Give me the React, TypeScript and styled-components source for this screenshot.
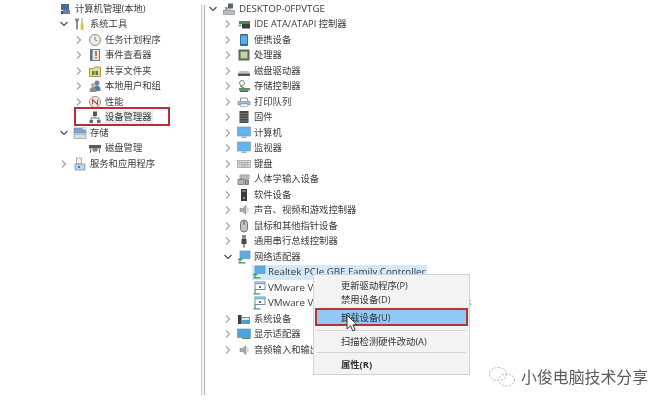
import React from 'react';
import styled, { createGlobalStyle } from 'styled-components';

const GlobalStyle = createGlobalStyle`
  html, body {
    margin: 0;
    padding: 0;
    background: #fff;
  }
`;

const Page = styled.div`
  position: relative;
  width: 670px;
  height: 408px;
  overflow: hidden;
  display: flex;
  align-items: flex-start;
  background: #fff;
  color: #3a3a3a;
  font-family: 'Open Sans', 'Noto Sans CJK SC', sans-serif;
  font-size: 9.3px;
  filter: blur(0.45px);
`;

const Pane = styled.div<{ $width: number; $left: number }>`
  width: ${(p) => p.$width}px;
  flex: none;
  box-sizing: border-box;
  padding: 1px 0 0 ${(p) => p.$left}px;
`;

const Divider = styled.div`
  flex: none;
  width: 4px;
  height: 390px;
  margin-top: 5px;
  background: #f4f4f4;
  border-left: 1px solid #d0d0d0;
  border-right: 1px solid #b4b4b4;
  box-sizing: border-box;
`;

const Row = styled.div<{ $depth: number }>`
  position: relative;
  display: flex;
  align-items: center;
  height: 15.5px;
  padding-left: ${(p) => p.$depth * 15}px;
  white-space: nowrap;
`;

const Expander = styled.span`
  flex: none;
  width: 10px;
  height: 10px;
  margin-right: 4px;
  display: flex;
  align-items: center;
  justify-content: center;
`;

const IconSlot = styled.span`
  flex: none;
  width: 14px;
  height: 14px;
  margin-right: 3px;
  display: flex;
`;

const Label = styled.span<{ $bg?: string; $latin?: boolean }>`
  background: ${(p) => p.$bg ?? 'transparent'};
  font-size: ${(p) => (p.$latin ? 9.75 : 9.3)}px;
  line-height: 14px;
  padding-right: 1px;
`;

const AdapterLabel = styled(Label)`
  margin-left: -1px;
`;

const SelectedStrip = styled.span`
  position: absolute;
  left: 44px;
  top: 0.5px;
  width: 175px;
  height: 14.5px;
  background: #d3e9fb;
`;

const Foreground = styled.span`
  position: relative;
  display: flex;
  align-items: center;
`;

const Callout = styled.span`
  position: absolute;
  left: 30px;
  top: -2.5px;
  width: 96px;
  height: 19px;
  box-sizing: border-box;
  border: 2px solid #bd2c38;
`;

const Menu = styled.div`
  position: absolute;
  left: 313px;
  top: 274px;
  width: 157px;
  height: 101px;
  box-sizing: border-box;
  padding: 3px 1px;
  background: #f3f3f3;
  border: 1px solid #d2d2d2;
  display: flex;
  flex-direction: column;
  color: #333;
`;

const MenuItem = styled.div<{ $active?: boolean; $bold?: boolean }>`
  height: ${(p) => (p.$active ? 20 : 16)}px;
  box-sizing: border-box;
  padding-left: ${(p) => (p.$active ? 24 : 26)}px;
  display: flex;
  align-items: center;
  font-weight: ${(p) => (p.$bold ? 700 : 400)};
  background: ${(p) => (p.$active ? '#92c9f7' : 'transparent')};
  border: ${(p) => (p.$active ? '2px solid #b93240' : 'none')};
`;

const MenuGap = styled.div`
  height: 2px;
`;

const Separator = styled.div`
  height: 1px;
  margin: 4px 2px;
  background: #d4d4d4;
`;

const Cursor = styled.svg`
  position: absolute;
  left: 346px;
  top: 314px;
`;

const Watermark = styled.div`
  position: absolute;
  left: 488px;
  top: 366px;
  display: flex;
  align-items: center;
  gap: 5px;
  color: #5c5c5c;
  font-size: 15.9px;
  font-family: 'Noto Sans CJK SC', sans-serif;
  line-height: 22px;
`;

type IconName =
  | 'mgmt' | 'tools' | 'clock' | 'event' | 'share' | 'users' | 'perf' | 'devmgr'
  | 'storage' | 'disk' | 'services' | 'computerNode' | 'ide' | 'portable' | 'cpu'
  | 'drive' | 'ctrl' | 'printer' | 'firmware' | 'monitor' | 'keyboard' | 'hid'
  | 'software' | 'sound' | 'mouse' | 'usb' | 'net' | 'vnet' | 'system' | 'display';

const glyphs: Record<IconName, React.ReactNode> = {
  mgmt: (<>
    <rect x="3" y="2" width="8" height="6" fill="#4a6a9c" />
    <rect x="5" y="8" width="7" height="4" fill="#6c7f99" />
    <rect x="3" y="9" width="2" height="3" fill="#2f4a78" />
  </>),
  tools: (<>
    <path d="M4 1.500v11" stroke="#777" strokeWidth="1.600" fill="none" />
    <path d="M2.500 1.500c0 2 .7 3 1.500 3s1.500-1 1.500-3" stroke="#666" fill="none" />
    <path d="M9 1v5" stroke="#999" strokeWidth="1" />
    <rect x="7.700" y="6" width="2.800" height="7" rx="1" fill="#e3bd3a" />
  </>),
  clock: (<>
    <circle cx="7" cy="7" r="5.500" fill="#efefe6" stroke="#8a8a8a" />
    <path d="M7 3.500V7l2.500 1" stroke="#8a8a6a" fill="none" />
  </>),
  event: (<>
    <rect x="2.500" y="1.500" width="9" height="11" fill="#e8e6dc" stroke="#6c7a90" />
    <rect x="2.500" y="1.500" width="2" height="11" fill="#5c6f8c" />
    <path d="M8 3v5" stroke="#c2452d" strokeWidth="1.400" />
    <rect x="7.300" y="9" width="1.400" height="1.500" fill="#c2452d" />
  </>),
  share: (<>
    <path d="M1.500 4.500h4l1-1.500h6v9.500h-11z" fill="#ecd98a" stroke="#b79b3e" />
    <rect x="4" y="7" width="2.500" height="4" fill="#4d8a57" />
    <rect x="7.500" y="7" width="2.500" height="4" fill="#4d6e9a" />
  </>),
  users: (<>
    <circle cx="9" cy="4" r="2.500" fill="#6a85ad" />
    <path d="M5.500 12c0-4 1.500-5.500 3.500-5.500s3.500 1.500 3.500 5.500z" fill="#5875a3" />
    <circle cx="5" cy="6" r="2" fill="#c7a77a" />
    <path d="M1.500 13c0-3.500 1.500-5 3.500-5s3.500 1.500 3.500 5z" fill="#8a8f94" />
  </>),
  perf: (<>
    <circle cx="7" cy="7" r="5.500" fill="#f3efe8" stroke="#8e8e8e" />
    <path d="M4.500 9.500V4.500l5 5V4.500" stroke="#b5413c" strokeWidth="1.100" fill="none" />
  </>),
  devmgr: (<>
    <rect x="5" y="1.500" width="4" height="4.500" fill="#555" />
    <path d="M7 6v2M3 10V8h8v2" stroke="#777" fill="none" />
    <rect x="1.500" y="10" width="3.500" height="3" fill="#6a6a6a" />
    <rect x="9" y="10" width="3.500" height="3" fill="#6a6a6a" />
  </>),
  storage: (<>
    <rect x="1" y="2" width="12" height="5" fill="#7da7cf" stroke="#6b8098" strokeWidth=".6" />
    <path d="M8 2h5v2z" fill="#eaf1f7" />
    <rect x="1" y="8" width="12" height="4.500" fill="#d9dde2" stroke="#7d8793" strokeWidth=".6" />
  </>),
  disk: (<>
    <rect x="1" y="4" width="12" height="3.500" fill="#5a5a5a" />
    <path d="M2.500 8v4M11.500 8v4M5 8h4v2H5z" stroke="#777" strokeWidth="1" fill="#999" />
  </>),
  services: (<>
    <rect x="3.500" y="1" width="5" height="6" fill="#eef0f2" stroke="#8a97a6" strokeWidth=".7" />
    <rect x="2" y="7" width="10" height="6" fill="#bcd4e6" stroke="#6f8ea8" strokeWidth=".7" />
    <rect x="5" y="9" width="2" height="2" fill="#4d7ca3" />
  </>),
  computerNode: (<>
    <rect x="6" y="1.500" width="5" height="5" fill="#58636f" />
    <path d="M8 6.500v2" stroke="#888" />
    <rect x="1.500" y="8.500" width="11" height="4" fill="#b9bfc6" stroke="#7a828b" strokeWidth=".6" />
    <rect x="3" y="5" width="3" height="3" fill="#8fa2b6" />
  </>),
  ide: (<>
    <rect x="2" y="4" width="11" height="3" fill="#4c8a52" />
    <rect x="5" y="7" width="8" height="4.500" fill="#3f3f3f" />
    <rect x="1.500" y="7.500" width="3" height="2" fill="#9aa09a" />
  </>),
  portable: (<>
    <rect x="3" y="1" width="8" height="12" rx="1" fill="#2c6ea8" />
    <rect x="4" y="2.500" width="6" height="8.500" fill="#55aef0" />
  </>),
  cpu: (<>
    <rect x="1.500" y="1.500" width="11" height="11" fill="#5a6a56" />
    <rect x="3.500" y="3.500" width="7" height="7" fill="#c4d4ac" stroke="#7c8f6b" strokeWidth=".6" />
  </>),
  drive: (<>
    <path d="M2.500 7h9l1.500 2.500H1z" fill="#c2c2c2" />
    <rect x="1" y="9.500" width="12" height="2.500" fill="#555" />
  </>),
  ctrl: (<>
    <circle cx="5" cy="4" r="2.500" fill="none" stroke="#6f8f6d" />
    <path d="M3 7l4 2" stroke="#555" />
    <rect x="2" y="9" width="11" height="2.500" fill="#4f9a57" />
    <rect x="3" y="11.500" width="8" height="1.500" fill="#555" />
  </>),
  printer: (<>
    <path d="M3.500 6V3h6.500l1 3" fill="#fff" stroke="#86939f" />
    <path d="M1 6.500h12v3.500h-2v-1.500H3v1.500H1z" fill="#a8c2d8" stroke="#6f8498" strokeWidth=".6" />
    <rect x="3.500" y="9" width="7" height="2.500" fill="#fff" stroke="#86939f" strokeWidth=".6" />
  </>),
  firmware: (<>
    <rect x="2.500" y="1" width="9" height="12" fill="#4a4a4a" />
    <path d="M2.500 3.500h9M2.500 6h9M2.500 8.500h9M2.500 11h9" stroke="#8c8c8c" strokeWidth=".7" />
  </>),
  monitor: (<>
    <rect x=".5" y="1" width="13" height="9" fill="#62b4ee" stroke="#7e9cb6" strokeWidth=".7" />
    <rect x="4.500" y="10.500" width="5" height="1.500" fill="#9ab1c4" />
  </>),
  keyboard: (<>
    <rect x=".5" y="3.500" width="13" height="7" fill="#d8d8d8" stroke="#9a9a9a" strokeWidth=".7" />
    <path d="M2 5.500h10M2 7.300h10M4 9h6" stroke="#808080" strokeWidth=".8" strokeDasharray="1 .6" />
  </>),
  hid: (<>
    <path d="M3 3h9v4H3z" fill="#dcdcdc" stroke="#777" strokeWidth=".7" />
    <path d="M4 4.200h7M4 5.800h7" stroke="#777" strokeDasharray="1 .6" strokeWidth=".8" />
    <path d="M1 7.500h6v5H1z" fill="#b5b5b5" stroke="#666" strokeWidth=".7" />
    <path d="M8 8h3.500v4.500H8z" fill="#9a9a9a" stroke="#666" strokeWidth=".7" />
  </>),
  software: (<>
    <rect x="4" y="1" width="6" height="12" fill="#3a3a3a" />
    <rect x="5.200" y="2.500" width="3.600" height="1.200" fill="#aaa" />
    <rect x="6" y="9" width="2" height="2" fill="#8a8a8a" />
  </>),
  sound: (<>
    <path d="M3 5.500h2.500L9 2.500v9L5.500 8.500H3z" fill="#a8a8a8" stroke="#7e7e7e" strokeWidth=".5" />
    <path d="M10.500 5c.8 1.300.8 2.700 0 4" stroke="#bcbcbc" fill="none" />
  </>),
  mouse: (<>
    <rect x="3.500" y="1" width="7" height="12" rx="3.500" fill="#c4c4c4" stroke="#6f6f6f" />
    <path d="M7 2v4" stroke="#555" />
  </>),
  usb: (<>
    <rect x="5" y="1" width="4" height="4" fill="#8c8c8c" />
    <rect x="4.500" y="5" width="5" height="5" fill="#4a4a4a" />
    <path d="M7 10v3.500" stroke="#666" strokeWidth="1.400" />
  </>),
  net: (<>
    <rect x="3" y="1" width="10" height="7.500" fill="#5aaee8" stroke="#6a8fad" strokeWidth=".7" />
    <path d="M1 9.500h4.500" stroke="#48a05a" strokeWidth="1.400" />
    <path d="M3 8.500v4M1.500 12.800h7" stroke="#3f8f6d" strokeWidth="1.200" />
  </>),
  vnet: (<>
    <rect x="3" y="1" width="10" height="7.500" fill="#fff" stroke="#5f87a6" strokeWidth=".9" />
    <path d="M3 2.500h10" stroke="#65b0e8" strokeWidth="1.500" />
    <circle cx="8" cy="6" r="1" fill="#444" />
    <path d="M1.500 12.800h7M3 8.500v4" stroke="#4d8f80" strokeWidth="1.200" />
  </>),
  system: (<>
    <path d="M1 3h4v2h8v7H1z" fill="#4f9ad0" />
    <rect x="1" y="3" width="3" height="9" fill="#3e3e3e" />
    <rect x="5" y="6" width="7" height="2" fill="#d6e8f4" />
  </>),
  display: (<>
    <rect x=".5" y="2" width="13" height="8.500" fill="#4aa3e0" stroke="#708a9e" strokeWidth=".6" />
    <path d="M5 10.500h8.500V12H5z" fill="#58945a" />
  </>),
};

const Icon: React.FC<{ name: IconName }> = ({ name }) => (
  <IconSlot>
    <svg width="14" height="14" viewBox="0 0 14 14">{glyphs[name]}</svg>
  </IconSlot>
);

const Chevron: React.FC<{ state?: 'open' | 'closed' }> = ({ state }) => (
  <Expander>
    {state === 'open' && (
      <svg width="10" height="10" viewBox="0 0 10 10">
        <path d="M1.500 3l3.500 3.500L8.500 3" fill="none" stroke="#4d4d4d" strokeWidth="1.200" />
      </svg>
    )}
    {state === 'closed' && (
      <svg width="10" height="10" viewBox="0 0 10 10">
        <path d="M3 1.500L6.500 5 3 8.500" fill="none" stroke="#a4a4a4" strokeWidth="1.200" />
      </svg>
    )}
  </Expander>
);

type Node = { label: string; icon: IconName; depth: number; state?: 'open' | 'closed'; latin?: boolean };

const leftTree: Node[] = [
  { label: '计算机管理(本地)', icon: 'mgmt', depth: 0 },
  { label: '系统工具', icon: 'tools', depth: 1, state: 'open' },
  { label: '任务计划程序', icon: 'clock', depth: 2, state: 'closed' },
  { label: '事件查看器', icon: 'event', depth: 2, state: 'closed' },
  { label: '共享文件夹', icon: 'share', depth: 2, state: 'closed' },
  { label: '本地用户和组', icon: 'users', depth: 2, state: 'closed' },
  { label: '性能', icon: 'perf', depth: 2, state: 'closed' },
  { label: '设备管理器', icon: 'devmgr', depth: 2 },
  { label: '存储', icon: 'storage', depth: 1, state: 'open' },
  { label: '磁盘管理', icon: 'disk', depth: 2 },
  { label: '服务和应用程序', icon: 'services', depth: 1, state: 'closed' },
];

const rightTop: Node[] = [
  { label: 'DESKTOP-0FPVTGE', icon: 'computerNode', depth: 0, state: 'open', latin: true },
  { label: 'IDE ATA/ATAPI 控制器', icon: 'ide', depth: 1, state: 'closed' },
  { label: '便携设备', icon: 'portable', depth: 1, state: 'closed' },
  { label: '处理器', icon: 'cpu', depth: 1, state: 'closed' },
  { label: '磁盘驱动器', icon: 'drive', depth: 1, state: 'closed' },
  { label: '存储控制器', icon: 'ctrl', depth: 1, state: 'closed' },
  { label: '打印队列', icon: 'printer', depth: 1, state: 'closed' },
  { label: '固件', icon: 'firmware', depth: 1, state: 'closed' },
  { label: '计算机', icon: 'monitor', depth: 1, state: 'closed' },
  { label: '监视器', icon: 'monitor', depth: 1, state: 'closed' },
  { label: '键盘', icon: 'keyboard', depth: 1, state: 'closed' },
  { label: '人体学输入设备', icon: 'hid', depth: 1, state: 'closed' },
  { label: '软件设备', icon: 'software', depth: 1, state: 'closed' },
  { label: '声音、视频和游戏控制器', icon: 'sound', depth: 1, state: 'closed' },
  { label: '鼠标和其他指针设备', icon: 'mouse', depth: 1, state: 'closed' },
  { label: '通用串行总线控制器', icon: 'usb', depth: 1, state: 'closed' },
  { label: '网络适配器', icon: 'net', depth: 1, state: 'open' },
];

const rightBottom: Node[] = [
  { label: '系统设备', icon: 'system', depth: 1, state: 'closed' },
  { label: '显示适配器', icon: 'display', depth: 1, state: 'closed' },
  { label: '音频输入和输出', icon: 'sound', depth: 1, state: 'closed' },
];

const TreeRow: React.FC<{ node: Node }> = ({ node }) => (
  <Row $depth={node.depth}>
    <Chevron state={node.state} />
    <Icon name={node.icon} />
    <Label $latin={node.latin}>{node.label}</Label>
  </Row>
);

const App: React.FC = () => (
  <>
    <GlobalStyle />
    <Page>
      <Pane $width={201} $left={44}>
        {leftTree.map((node) =>
          node.label === '设备管理器' ? (
            <Row key={node.label} $depth={node.depth}>
              <Chevron />
              <Icon name={node.icon} />
              <Label $bg="#ececec">{node.label}</Label>
              <Callout />
            </Row>
          ) : (
            <TreeRow key={node.label} node={node} />
          ),
        )}
      </Pane>
      <Divider />
      <Pane $width={465} $left={3}>
        {rightTop.map((node) => (
          <TreeRow key={node.label} node={node} />
        ))}
        <Row $depth={2}>
          <SelectedStrip />
          <Foreground>
            <Chevron />
            <Icon name="net" />
            <AdapterLabel $latin>Realtek PCIe GBE Family Controller</AdapterLabel>
          </Foreground>
        </Row>
        <Row $depth={2}>
          <Chevron />
          <Icon name="vnet" />
          <AdapterLabel $latin>VMware Virtual Ethernet Adapter for VMnet1</AdapterLabel>
        </Row>
        <Row $depth={2}>
          <Chevron />
          <Icon name="vnet" />
          <AdapterLabel $latin>VMware Virtual Ethernet Adapter for VMnet8</AdapterLabel>
        </Row>
        {rightBottom.map((node) => (
          <TreeRow key={node.label} node={node} />
        ))}
      </Pane>

      <Menu>
        <MenuItem>更新驱动程序(P)</MenuItem>
        <MenuItem>禁用设备(D)</MenuItem>
        <MenuGap />
        <MenuItem $active>卸载设备(U)</MenuItem>
        <Separator />
        <MenuItem>扫描检测硬件改动(A)</MenuItem>
        <Separator />
        <MenuItem $bold>属性(R)</MenuItem>
      </Menu>

      <Cursor width="13" height="18" viewBox="0 0 13 18">
        <path d="M1 1v14l3.500-3.200 2.300 5 2.400-1-2.300-5H11z" fill="#fff" stroke="#333" strokeWidth="1" />
      </Cursor>

      <Watermark>
        <svg width="28" height="22" viewBox="0 0 28 22">
          <g fill="none" stroke="#b4b4b4" strokeWidth="1" strokeDasharray="2 1.500">
            <ellipse cx="10" cy="8" rx="8.500" ry="6.500" />
            <ellipse cx="18.500" cy="14" rx="8" ry="6" />
          </g>
        </svg>
        <span>小俊电脑技术分享</span>
      </Watermark>
    </Page>
  </>
);

export default App;
